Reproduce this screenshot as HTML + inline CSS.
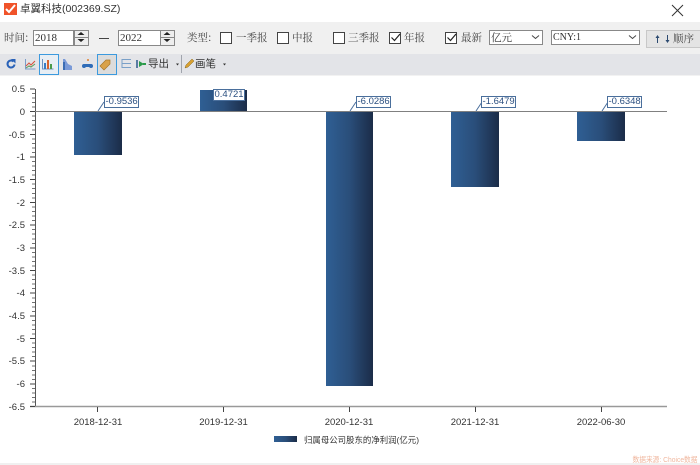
<!DOCTYPE html>
<html><head><meta charset="utf-8"><style>
html,body{margin:0;padding:0;background:#fff}
#p{position:relative;width:700px;height:465px;overflow:hidden;background:#fff;font-family:"Liberation Sans","Noto Sans CJK SC",sans-serif}
.a{position:absolute}
svg{position:absolute;left:0;top:0}
.s{font-family:"Noto Serif CJK SC","Liberation Serif",serif;font-size:10.5px;color:#444;line-height:14px;white-space:nowrap}
.cb{position:absolute;top:32px;width:10px;height:10px;border:1px solid #444;background:#fff}
.inp{position:absolute;top:30px;height:14px;border:1px solid #888;background:#fff;font-family:"Liberation Serif",serif;font-size:11px;line-height:14px;color:#333;padding-left:1px}
.sp{position:absolute;top:30px;width:13px;height:14px;border:1px solid #888;background:#eee}
.lb{position:absolute;background:#fff;border:1px solid #4a6f9c;font-size:9.5px;line-height:10px;height:10px;color:#2c5080;padding:0 .5px;white-space:nowrap}
</style></head><body><div id="p">
<div class="a" style="left:0;top:22px;width:700px;height:32px;background:#f0f0f0"></div>
<div class="a" style="left:0;top:54px;width:700px;height:21px;background:#e3e4e8"></div>
<div class="a" style="left:0;top:75px;width:700px;height:1px;background:#f2f2f2"></div>
<div class="a" style="left:0;top:463px;width:700px;height:2px;background:#f0f0f0"></div>

<div class="a" style="left:4px;top:3px;width:13px;height:12px;background:#f0532a"></div>
<div class="a" style="left:20px;top:1px;font-size:10.5px;line-height:17px;color:#333;white-space:nowrap">卓翼科技(002369.SZ)</div>

<div class="a s" style="left:4px;top:31px">时间:</div>
<div class="inp" style="left:33px;width:38px">2018</div><div class="sp" style="left:74px"></div>
<div class="a" style="left:99px;top:38px;width:10px;height:1px;background:#444"></div>
<div class="inp" style="left:118px;width:40px">2022</div><div class="sp" style="left:160px"></div>
<div class="a s" style="left:187px;top:31px">类型:</div>
<div class="cb" style="left:220px"></div><div class="a s" style="left:236px;top:31px">一季报</div>
<div class="cb" style="left:277px"></div><div class="a s" style="left:292px;top:31px">中报</div>
<div class="cb" style="left:333px"></div><div class="a s" style="left:348px;top:31px">三季报</div>
<div class="cb" style="left:389px"></div><div class="a s" style="left:404px;top:31px">年报</div>
<div class="cb" style="left:445px"></div><div class="a s" style="left:461px;top:31px">最新</div>
<div class="inp" style="left:489px;width:51px;height:13px;color:#333;font-size:10.5px;line-height:13px;font-family:'Noto Serif CJK SC',serif">亿元</div>
<div class="inp" style="left:551px;width:86px;height:13px;line-height:13px;font-size:10px">CNY:1</div>
<div class="a" style="left:646px;top:30px;width:54px;height:18px;background:#e4e4e4;border:1px solid #c8c8c8;border-right:0;box-sizing:border-box"></div>
<div class="a s" style="left:673px;top:32px">顺序</div>

<div class="a" style="left:39px;top:54px;width:18px;height:19px;border:1px solid #3c9ade;background:#e8eef4"></div>
<div class="a" style="left:97px;top:54px;width:18px;height:19px;border:1px solid #3c9ade;background:#dcdcdc"></div>
<div class="a" style="left:148px;top:57px;font-size:10.5px;line-height:15px;color:#333;white-space:nowrap">导出</div>
<div class="a" style="left:195px;top:57px;font-size:10.5px;line-height:15px;color:#333;white-space:nowrap">画笔</div>

<svg width="700" height="465" viewBox="0 0 700 465" xmlns="http://www.w3.org/2000/svg">
<defs><linearGradient id="g" x1="0" x2="1" y1="0" y2="0"><stop offset="0" stop-color="#2f5f94"/><stop offset=".5" stop-color="#2a4e7a"/><stop offset="1" stop-color="#1b2c48"/></linearGradient></defs>
<path d="M6 9l3 3 6-7" stroke="#fff" stroke-width="2" fill="none"/>
<path d="M672 5l11 11M683 5l-11 11" stroke="#333" stroke-width="1" fill="none"/>
<g fill="#222"><path d="M77.500 35l3.500-3 3.500 3zM77.500 39l3.500 3 3.500-3z"/><path d="M163.500 35l3.500-3 3.500 3zM163.500 39l3.500 3 3.500-3z"/></g>
<path d="M74 37.500h14M160 37.500h14" stroke="#888"/>
<path d="M391.500 37.500l3 3 5.500-6.500M447.500 37.500l3 3 5.500-6.500" stroke="#222" stroke-width="1.200" fill="none"/>
<path d="M532 35.500l3.500 3 3.500-3M629 35.500l3.500 3 3.500-3" stroke="#444" fill="none"/>
<path d="M657.500 37v6M667.500 35v6" stroke="#2c4a70"/><path d="M655.500 38l2-3 2 3zM665.500 40l2 3 2-3z" fill="#2c4a70"/>
<path d="M13.500 61.500a3.500 3.500 0 1 0 1 3" stroke="#2a62b8" stroke-width="2" fill="none"/><path d="M11 59h4.500v4.500z" fill="#2a62b8"/>
<path d="M25.500 59v10h10" stroke="#7c9cc8" fill="none"/><path d="M26 66l3-3 2 2 4-4" stroke="#d8503c" fill="none"/><path d="M26 68l3-2 2 1 4-3" stroke="#5a9c5a" fill="none"/>
<path d="M42.500 59v10h11" stroke="#6c90c0" fill="none"/><rect x="44" y="63" width="2" height="6" fill="#3b7cc4"/><rect x="47" y="60" width="2" height="9" fill="#d9622c"/><rect x="50" y="64" width="2" height="5" fill="#4a9a4a"/>
<path d="M63 59h2l3 5 4 2v4h-9z" fill="#7a9ad8"/><path d="M63 62h2v8h-2z" fill="#3b6cb4"/>
<rect x="83" y="64" width="9" height="3" rx="1.500" fill="#2f6cb8"/><circle cx="84" cy="66" r="2" fill="#2f6cb8"/><circle cx="91" cy="66" r="2" fill="#2f6cb8"/><circle cx="88" cy="60" r="1" fill="#e08030"/>
<path d="M100 66l6-6h4v4l-6 6z" fill="#d9a24a" stroke="#a87828" stroke-width=".7"/>
<path d="M122 59.500h9M122 63.500h9M122 67.500h9M122 59v9" stroke="#7aa0c8" fill="none"/>
<path d="M137 60v8" stroke="#2c5a8c" stroke-width="1.500"/><path d="M139 61l5 3-5 3z" fill="#2a9a4a"/><path d="M143 63h3v2h-3z" fill="#2a9a4a"/>
<path d="M176 63.500h3l-1.500 2z" fill="#333"/>
<path d="M181.500 55v18" stroke="#a0a4ac"/>
<path d="M185 68l1-3 6-6 2 2-6 6z" fill="#d8a030" stroke="#8a6a20" stroke-width=".5"/>
<path d="M223 63.500h3l-1.500 2z" fill="#333"/>
<rect x="74" y="112" width="48" height="43" fill="url(#g)"/>
<rect x="200" y="90" width="47" height="22" fill="url(#g)"/>
<rect x="326" y="112" width="47" height="274" fill="url(#g)"/>
<rect x="451" y="112" width="48" height="75" fill="url(#g)"/>
<rect x="577" y="112" width="48" height="29" fill="url(#g)"/>
<path d="M35.500 89v318" stroke="#555"/>
<path d="M30 111.500H667" stroke="#808080"/>
<path d="M30 406.500H667" stroke="#999" stroke-width="1.500"/>
<g stroke="#444" fill="none">
<path d="M30 89h5M30 111.500h5M30 134.500h5M30 157h5M30 179.500h5M30 202.500h5M30 225h5M30 248h5M30 270.500h5M30 293h5M30 316h5M30 338.500h5M30 361h5M30 384h5M30 406.500h5"/>
<path stroke-width=".8" d="M32 93.500h3M32 98h3M32 102.500h3M32 107h3M32 116h3M32 120.500h3M32 125h3M32 130h3M32 139h3M32 143.500h3M32 148h3M32 152.500h3M32 161.500h3M32 166h3M32 170.500h3M32 175h3M32 184h3M32 188.500h3M32 193.500h3M32 198h3M32 207h3M32 211.500h3M32 216h3M32 220.500h3M32 229.500h3M32 234h3M32 239h3M32 243.500h3M32 252.500h3M32 257h3M32 261.500h3M32 266h3M32 275h3M32 279.500h3M32 284h3M32 288.500h3M32 298h3M32 302.500h3M32 307h3M32 311.500h3M32 320.500h3M32 325h3M32 329.500h3M32 334h3M32 343h3M32 347.500h3M32 352h3M32 356.500h3M32 366h3M32 370.500h3M32 375h3M32 379.500h3M32 388.500h3M32 393h3M32 397.500h3M32 402h3"/>
<path d="M97.500 407v5M223.500 407v5M349.500 407v5M475.500 407v5M601.500 407v5"/>
</g>
<path d="M98 111l6-9M350 111l6-9M476 111l6-9M602 111l6-9" stroke="#4a6f9c" fill="none"/>
<g font-family="Liberation Sans,sans-serif" font-size="9.500" fill="#333" text-anchor="end">
<text x="25" y="92">0.5</text><text x="25" y="115">0</text><text x="25" y="138">-0.5</text><text x="25" y="160">-1</text><text x="25" y="183">-1.5</text><text x="25" y="206">-2</text><text x="25" y="228">-2.5</text><text x="25" y="251">-3</text><text x="25" y="274">-3.5</text><text x="25" y="296">-4</text><text x="25" y="319">-4.5</text><text x="25" y="342">-5</text><text x="25" y="364">-5.5</text><text x="25" y="387">-6</text><text x="25" y="410">-6.5</text>
</g>
<g font-family="Liberation Sans,sans-serif" font-size="9.500" fill="#333" text-anchor="middle">
<text x="98" y="425">2018-12-31</text><text x="223.500" y="425">2019-12-31</text><text x="349" y="425">2020-12-31</text><text x="475" y="425">2021-12-31</text><text x="601" y="425">2022-06-30</text>
</g>
<rect x="274" y="436" width="23" height="6" fill="url(#g)"/>
<text x="304" y="443" textLength="115" lengthAdjust="spacingAndGlyphs" font-family="Liberation Sans,Noto Sans CJK SC,sans-serif" font-size="8.500" fill="#333">归属母公司股东的净利润(亿元)</text>
<text x="632.500" y="462" textLength="65" lengthAdjust="spacingAndGlyphs" font-family="Liberation Sans,Noto Sans CJK SC,sans-serif" font-size="7.500" fill="#f0b8a0">数据来源: Choice数据</text>
</svg>
<div class="lb" style="left:104px;top:96px">-0.9536</div>
<div class="lb" style="left:213px;top:89px">0.4721</div>
<div class="lb" style="left:356px;top:96px">-6.0286</div>
<div class="lb" style="left:481px;top:96px">-1.6479</div>
<div class="lb" style="left:607px;top:96px">-0.6348</div>
</div></body></html>
